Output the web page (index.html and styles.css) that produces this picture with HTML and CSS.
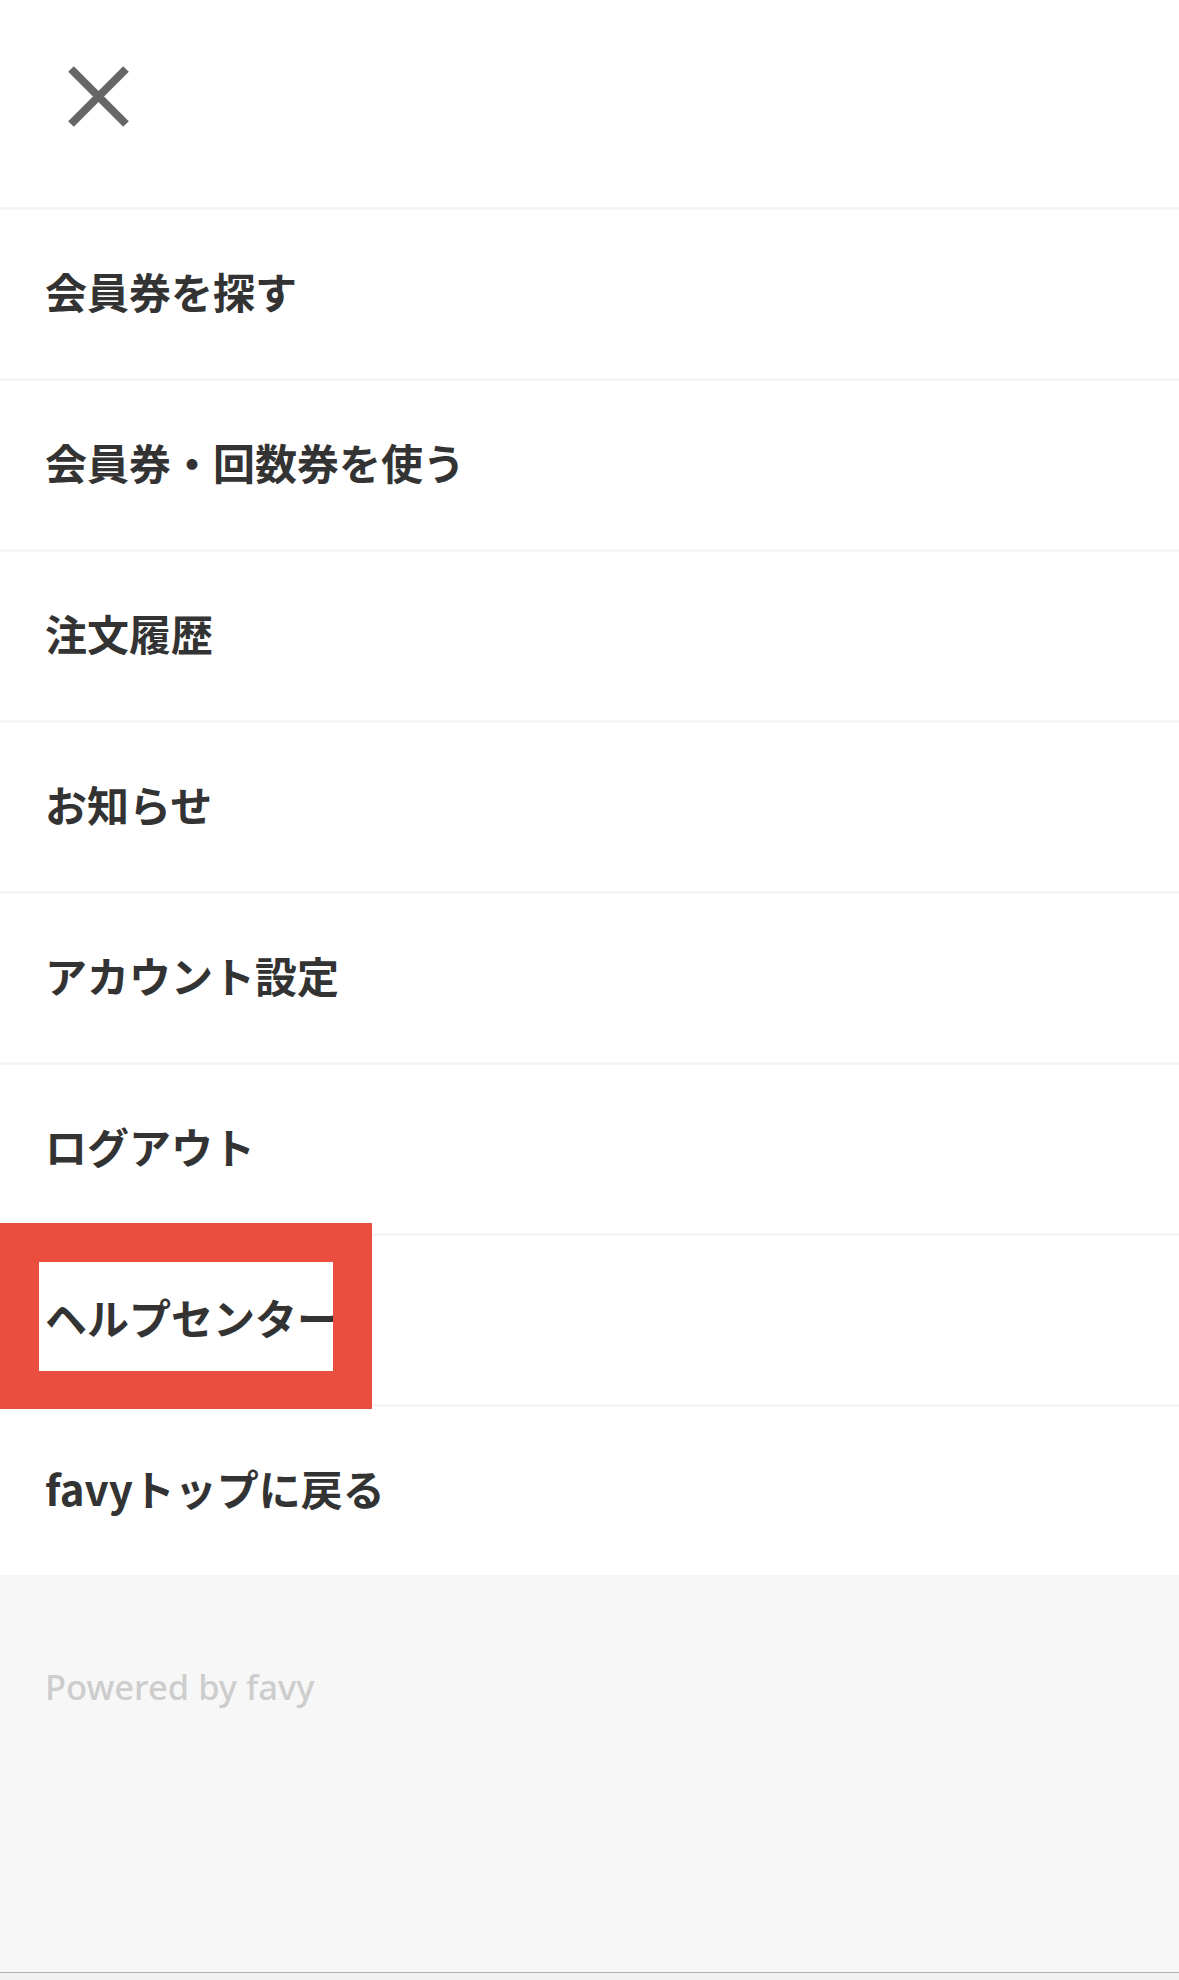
FILE: index.html
```html
<!DOCTYPE html>
<html lang="ja">
<head>
<meta charset="utf-8">
<title>Menu</title>
<link rel="stylesheet" href="styles.css">
</head>
<body>
<div class="page">
  <header class="menu-header">
    <button class="close-btn" aria-label="閉じる">
      <svg class="close-icon" viewBox="0 0 61 61" width="61" height="61">
        <line x1="3" y1="3" x2="58" y2="58" />
        <line x1="58" y1="3" x2="3" y2="58" />
      </svg>
    </button>
  </header>
  <nav class="menu-list">
    <a class="menu-item">会員券を探す</a>
    <a class="menu-item">会員券・回数券を使う</a>
    <a class="menu-item">注文履歴</a>
    <a class="menu-item">お知らせ</a>
    <a class="menu-item">アカウント設定</a>
    <a class="menu-item">ログアウト</a>
    <a class="menu-item menu-item--marked">ヘルプセンター<span class="highlight-frame"></span></a>
    <a class="menu-item">favyトップに戻る</a>
  </nav>
  <footer class="menu-footer">
    <p class="powered">Powered by favy</p>
  </footer>
  <div class="bottom-bar"></div>
</div>
</body>
</html>
```

FILE: styles.css
```css
* {
  box-sizing: border-box;
}

html, body {
  margin: 0;
  padding: 0;
  background: #ffffff;
}

body {
  font-family: "Noto Sans CJK JP", "Noto Sans", sans-serif;
  color: #333333;
}

.page {
  width: 1179px;
  height: 1980px;
  display: flex;
  flex-direction: column;
  overflow: hidden;
}

.menu-header {
  height: 207px;
  flex: none;
  padding: 66px 0 0 68px;
}

.close-btn {
  border: 0;
  padding: 0;
  margin: 0;
  background: transparent;
  display: block;
  width: 61px;
  height: 61px;
}

.close-icon {
  display: block;
}

.close-icon line {
  stroke: #666666;
  stroke-width: 8;
  stroke-linecap: butt;
}

.menu-list {
  display: flex;
  flex-direction: column;
  flex: none;
}

.menu-item {
  position: relative;
  display: flex;
  align-items: center;
  height: 171px;
  border-top: 3px solid #f5f5f5;
  padding: 0 0 6px 45px;
  font-size: 42px;
  line-height: 1;
  font-weight: 700;
  color: #333333;
  text-decoration: none;
}

.highlight-frame {
  position: absolute;
  z-index: 2;
  left: 0;
  top: -13px;
  width: 372px;
  height: 186px;
  border-style: solid;
  border-color: #e94e3f;
  border-width: 39px 39px 38px 39px;
  pointer-events: none;
}

.menu-footer {
  flex: none;
  height: 397px;
  background: #f7f7f7;
  padding: 92px 0 0 45px;
}

.powered {
  margin: 0;
  font-family: "Noto Sans", "Liberation Sans", sans-serif;
  font-size: 34.5px;
  font-weight: 500;
  line-height: 40px;
  color: #cdcdcd;
}

.bottom-bar {
  flex: 1;
  background: #f2f2f2;
  border-top: 1px solid #b3b3b3;
}
```
